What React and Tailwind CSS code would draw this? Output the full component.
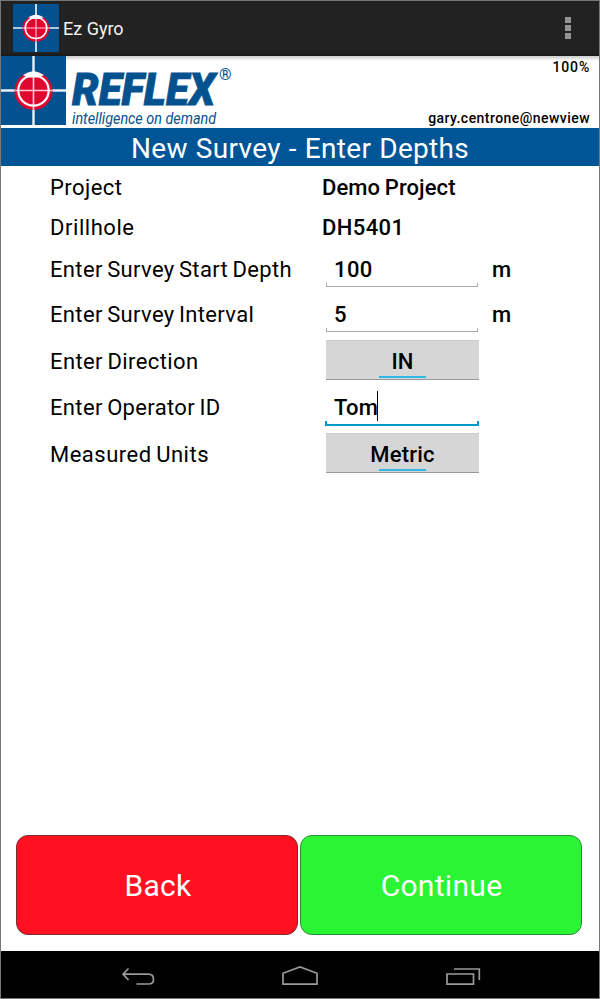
function Target({ className }) {
  return (
    <svg className={className} viewBox="0 0 65 69" preserveAspectRatio="none" aria-hidden="true">
      <rect width="65" height="69" fill="#03518f" />
      <path d="M32.5 0V69M0 34.5H65" stroke="#e9f0f8" strokeWidth="2.4" />
      <circle cx="32.5" cy="35" r="19" fill="#e2052d" />
      <path d="M32.5 16V54M14 34.5H51" stroke="#f7ccd4" strokeWidth="1.6" />
      <circle cx="32.5" cy="34.5" r="15.2" fill="none" stroke="#fff" strokeWidth="2.2" />
      <path d="M22 19L27 16.5L32.5 15L38 16.5L43 19L38 21.5H27Z" fill="#fff" />
    </svg>
  );
}

function Row({ label, className, labelClass = "tracking-[0.35px]", children }) {
  return (
    <div className={`flex items-center pl-[49px] ${className}`}>
      <span className={`w-[272px] shrink-0 [word-spacing:-1.4px] ${labelClass}`}>{label}</span>
      {children}
    </div>
  );
}

function Field({ value }) {
  return (
    <>
      <div className="ml-1 flex h-[35px] w-[152px] flex-col justify-between">
        <span className="pl-2 pt-[1px] leading-[34px] font-medium tracking-[0.4px]">{value}</span>
        <span className="-mt-[5px] h-1 shrink-0 border-x border-b border-[#aaa]" />
      </div>
      <span className="ml-[14px] font-medium">m</span>
    </>
  );
}

function Picker({ value }) {
  return (
    <button className="mb-px ml-1 flex h-10 w-[153px] flex-col items-center border-t border-b border-t-[#ccc] border-b-[#999] bg-[#d6d6d6] font-medium">
      <span className="h-[35px] pt-[1px] leading-[40px] tracking-[0.2px]">{value}</span>
      <span className="h-[2px] w-[47px] bg-[#33b5e5]" />
    </button>
  );
}

export default function App() {
  return (
    <div className="flex h-[999px] w-[600px] flex-col overflow-hidden border border-[#777] bg-white font-['Roboto',sans-serif] text-[22px] text-black">
      <header className="flex h-[55px] shrink-0 items-center border-b-2 border-[#1a1a1a] bg-[#222] pl-3 text-[#f3f3f3]">
        <Target className="mt-[1px] h-12 w-[46px]" />
        <span className="ml-1 pt-[2px] text-[18px]">Ez Gyro</span>
        <div className="mr-[28px] ml-auto flex flex-col gap-[2px]">
          <span className="size-[6px] bg-[#949494]" />
          <span className="size-[6px] bg-[#949494]" />
          <span className="size-[6px] bg-[#949494]" />
        </div>
      </header>
      <div className="flex h-[72px] shrink-0 justify-between bg-linear-to-b from-[#ccc] to-white to-[5px]">
        <div className="flex">
          <Target className="h-[69px] w-[65px]" />
          <svg width="170" height="72" fill="#03518f" fontFamily="Roboto, sans-serif" fontStyle="italic">
            <text x="6" y="49" fontSize="43.5" fontWeight="900" stroke="#03518f" strokeWidth="0.8" textLength="143" lengthAdjust="spacingAndGlyphs">REFLEX</text>
            <text x="153" y="24" fontSize="16" fontStyle="normal" fontWeight="500">®</text>
            <text x="6" y="67.5" fontSize="16" textLength="144" lengthAdjust="spacingAndGlyphs">intelligence on demand</text>
          </svg>
        </div>
        <div className="flex flex-col items-end justify-between pt-[1px] pr-[9px] text-[14px] leading-5 font-medium tracking-[0.45px]">
          <span className="tracking-[0.8px]">100%</span>
          <span>gary.centrone@newview</span>
        </div>
      </div>
      <h1 className="h-[38px] shrink-0 bg-[#005596] pt-[1px] text-center text-[28px] leading-[40px] tracking-[0.3px] text-white [word-spacing:0.8px]">
        New Survey - Enter Depths
      </h1>
      <main className="flex flex-1 flex-col pt-px">
        <Row label="Project" className="h-10" labelClass="tracking-[0.45px]"><span className="font-medium tracking-[0.1px] [word-spacing:-1px]">Demo Project</span></Row>
        <Row label="Drillhole" className="h-10" labelClass="tracking-[0.55px]"><span className="font-medium tracking-[0.4px]">DH5401</span></Row>
        <Row label="Enter Survey Start Depth" className="h-[44px]"><Field value="100" /></Row>
        <Row label="Enter Survey Interval" className="h-[46px]"><Field value="5" /></Row>
        <Row label="Enter Direction" className="h-[46px]" labelClass="pt-[2px] tracking-[0.4px]"><Picker value="IN" /></Row>
        <Row label="Enter Operator ID" className="h-[47px]" labelClass="pt-[2px] tracking-[0.35px]">
          <div className="mt-[4px] ml-[3px] flex h-[35px] w-[154px] flex-col">
            <div className="flex h-[30px] shrink-0 pl-[9px] font-medium">
              <span className="leading-[33px] tracking-[0.2px]">Tom</span>
              <span className="-ml-[1px] h-[30px] w-px bg-black" />
            </div>
            <span className="h-[5px] shrink-0 border-x-2 border-b-2 border-[#0099cc]" />
          </div>
        </Row>
        <Row label="Measured Units" className="h-[46px]" labelClass="pt-[2px] tracking-[0.5px]"><Picker value="Metric" /></Row>
        <div className="mt-auto mb-4 flex gap-[2px] pl-[15px] text-[30px] tracking-[0.3px] text-white">
          <button className="h-[100px] w-[282px] rounded-xl border-[1.5px] border-[#7d2b31] bg-[#ff1122] pl-[2px]">Back</button>
          <button className="h-[100px] w-[282px] rounded-xl border-[1.5px] border-[#338a3b] bg-[#2af535] pl-px">Continue</button>
        </div>
      </main>
      <nav className="flex h-[47px] shrink-0 bg-black pl-[120px]">
        <svg width="360" height="47" fill="none" stroke="#999" strokeWidth="1.7">
          <path d="M7.5 17.5L2 23.2L7.5 29M2 23.2H27.5Q32.5 23.2 32.5 28.5Q32.5 33 27.5 33H15.5" />
          <path d="M162 33.2V22.3L179 16L196 22.3V33.2Z" />
          <path d="M326 23H352.5V33.2H326ZM333 18H358.3V29" />
        </svg>
      </nav>
    </div>
  );
}
